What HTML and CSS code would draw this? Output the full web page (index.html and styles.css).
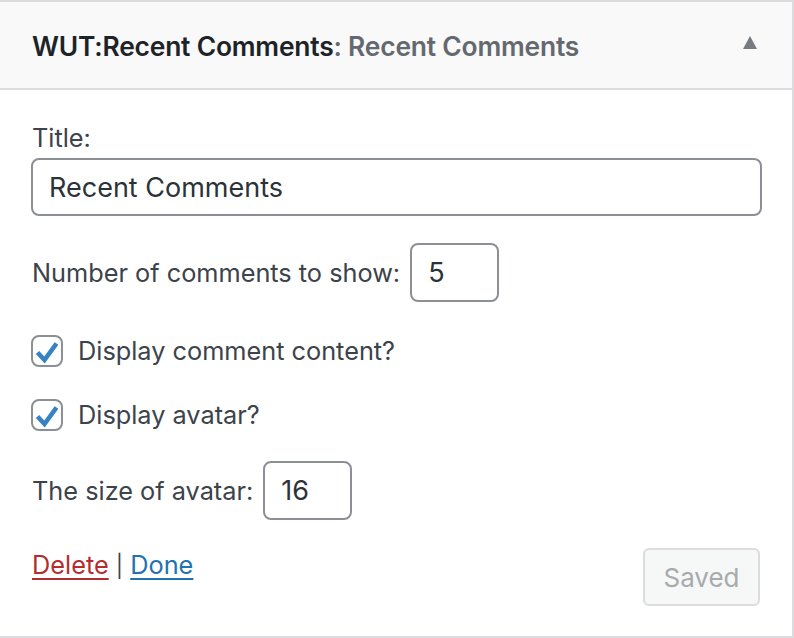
FILE: index.html
```html
<!DOCTYPE html>
<html>
<head>
<meta charset="utf-8">
<link rel="stylesheet" href="styles.css">
</head>
<body>
<div class="widget">
  <div class="widget-top">
    <h3 class="widget-title">WUT:Recent Comments<span class="in-title">: Recent Comments</span></h3>
    <span class="toggle"></span>
  </div>
  <div class="widget-inside">
    <div class="field-title">
      <label class="lbl">Title:</label>
      <input class="text wide" type="text" value="Recent Comments">
    </div>
    <div class="row row-number">
      <label class="lbl">Number of comments to show:</label>
      <input class="text small" type="text" value="5">
    </div>
    <div class="check-row first">
      <span class="check"><svg width="32" height="32" viewBox="0 0 32 32"><path d="M6.5 17.5 L13.5 25 L25.5 8.5" fill="none" stroke="#3582c4" stroke-width="4.6" stroke-linejoin="miter"/></svg></span>
      <span class="lbl">Display comment content?</span>
    </div>
    <div class="check-row">
      <span class="check"><svg width="32" height="32" viewBox="0 0 32 32"><path d="M6.5 17.5 L13.5 25 L25.5 8.5" fill="none" stroke="#3582c4" stroke-width="4.6" stroke-linejoin="miter"/></svg></span>
      <span class="lbl">Display avatar?</span>
    </div>
    <div class="row row-size">
      <label class="lbl">The size of avatar:</label>
      <input class="text small" type="text" value="16">
    </div>
    <div class="actions">
      <div class="links"><a class="delete" href="#">Delete</a> <span class="sep">|</span> <a class="done" href="#">Done</a></div>
      <button class="saved">Saved</button>
    </div>
  </div>
</div>
</body>
</html>
```

FILE: styles.css
```css
html, body {
  margin: 0;
  padding: 0;
  background: #ffffff;
}
body {
  width: 794px;
  height: 638px;
  overflow: hidden;
  font-family: Inter, "Liberation Sans", sans-serif;
  color: #3c434a;
}
.widget {
  width: 792px;
  height: 634px;
  border-top: 2px solid #dcdcde;
  border-right: 2px solid #dcdcde;
  border-bottom: 2px solid #dcdcde;
  display: flex;
  flex-direction: column;
}
.widget-top {
  height: 86px;
  background: #f9f9f9;
  border-bottom: 2px solid #dcdcde;
  display: flex;
  align-items: center;
  justify-content: space-between;
  padding: 0 35px 0 32px;
}
.widget-title {
  margin: 0;
  font-size: 26.4px;
  font-weight: 600;
  color: #1d2327;
  letter-spacing: -0.2px;
  padding-top: 2px;
}
.in-title {
  color: #646970;
}
.toggle {
  width: 0;
  height: 0;
  border-left: 7.5px solid transparent;
  border-right: 7.5px solid transparent;
  border-bottom: 13px solid #787c82;
  margin-top: -5px;
}
.widget-inside {
  padding: 0 32px 0 31px;
  display: flex;
  flex-direction: column;
  font-size: 25.3px;
}
.lbl {
  font-size: 25.3px;
  line-height: 36px;
  color: #3c434a;
}
.field-title {
  display: flex;
  flex-direction: column;
  margin-top: 30px;
}
.field-title .lbl {
  padding-left: 1px;
  margin-bottom: 2px;
}
.text {
  box-sizing: border-box;
  height: 58px;
  border: 2px solid #8c8f94;
  border-radius: 8px;
  padding: 0 16px;
  font-family: Inter, "Liberation Sans", sans-serif;
  font-size: 27px;
  color: #2c3338;
  background: #fff;
  outline: none;
}
.wide {
  width: 731px;
}
.small {
  width: 89px;
  height: 59px;
  margin-left: 10px;
}
.row {
  display: flex;
  align-items: center;
  padding-left: 1px;
}
.row-number {
  margin-top: 27px;
}
.check-row {
  display: flex;
  align-items: center;
  height: 32px;
  margin-top: 32px;
}
.check-row.first {
  margin-top: 33px;
}
.check {
  box-sizing: border-box;
  width: 32px;
  height: 32px;
  border: 2px solid #8c8f94;
  border-radius: 8px;
  display: flex;
  align-items: center;
  justify-content: center;
  margin-right: 15px;
  background: #fff;
}
.check svg {
  display: block;
  margin: -2px;
}
.row-size {
  margin-top: 30px;
}
.actions {
  display: flex;
  justify-content: space-between;
  align-items: flex-start;
  margin-top: 28px;
}
.links {
  font-size: 25.3px;
  line-height: 36px;
  padding-left: 1px;
  margin-top: -1px;
}
.delete {
  color: #b32d2e;
  text-decoration: underline;
  text-underline-offset: 4px;
}
.done {
  color: #2271b1;
  text-decoration: underline;
  text-underline-offset: 4px;
}
.sep {
  color: #3c434a;
  font-size: 22px;
}
.saved {
  box-sizing: border-box;
  width: 117px;
  height: 58px;
  border: 2px solid #dcdcde;
  border-radius: 6px;
  background: #f6f7f7;
  color: #a7aaad;
  font-family: Inter, "Liberation Sans", sans-serif;
  font-size: 26px;
  padding: 0;
  margin-top: 0;
}
```
